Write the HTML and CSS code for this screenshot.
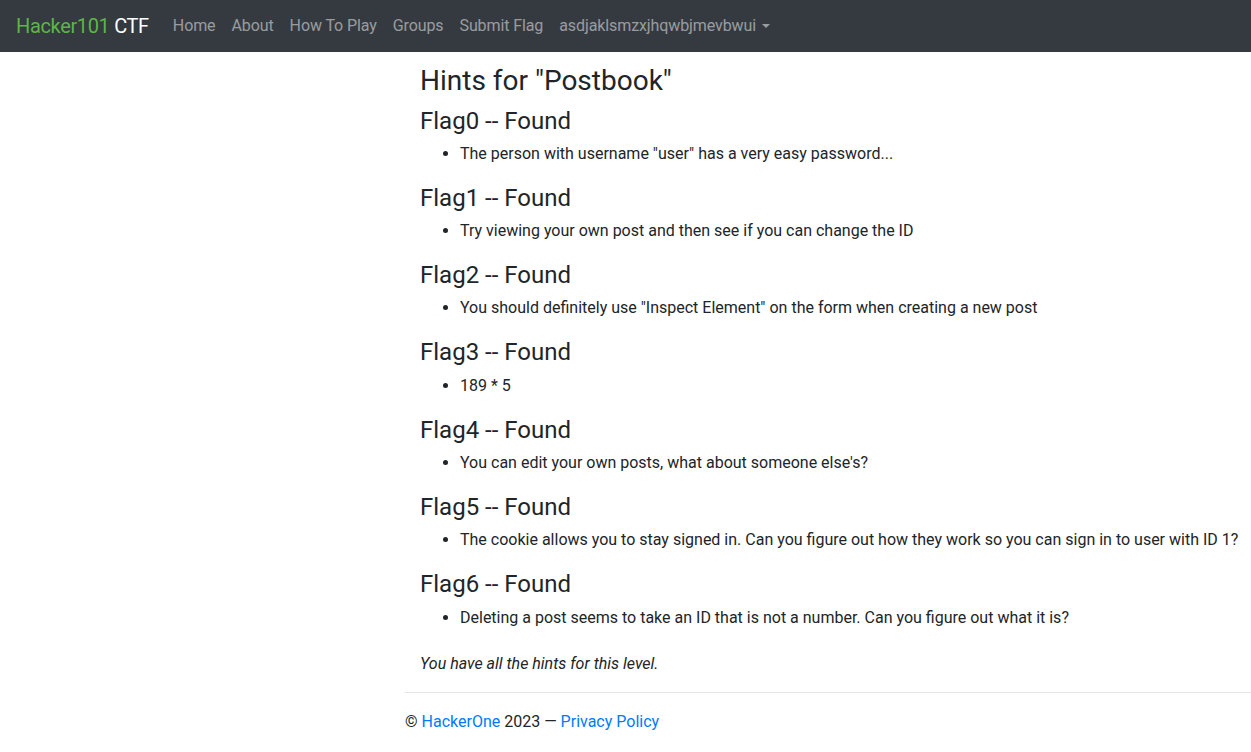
FILE: index.html
```html
<!DOCTYPE html>
<html lang="en">
<head>
<meta charset="utf-8">
<title>Hints for "Postbook"</title>
<link rel="stylesheet" href="styles.css">
</head>
<body>
<nav class="navbar">
  <a class="brand" href="#"><span class="brand-green">Hacker101</span> CTF</a>
  <ul class="nav">
    <li><a href="#">Home</a></li>
    <li><a href="#">About</a></li>
    <li><a href="#">How To Play</a></li>
    <li><a href="#">Groups</a></li>
    <li><a href="#">Submit Flag</a></li>
    <li><a href="#" class="dropdown">asdjaklsmzxjhqwbjmevbwui</a></li>
  </ul>
</nav>
<div class="page">
  <main class="content">
    <h3 class="title">Hints for "Postbook"</h3>
    <h4 class="flag">Flag0 -- Found</h4>
    <ul class="hints"><li>The person with username "user" has a very easy password...</li></ul>
    <h4 class="flag">Flag1 -- Found</h4>
    <ul class="hints"><li>Try viewing your own post and then see if you can change the ID</li></ul>
    <h4 class="flag">Flag2 -- Found</h4>
    <ul class="hints"><li>You should definitely use "Inspect Element" on the form when creating a new post</li></ul>
    <h4 class="flag">Flag3 -- Found</h4>
    <ul class="hints"><li>189 * 5</li></ul>
    <h4 class="flag">Flag4 -- Found</h4>
    <ul class="hints"><li>You can edit your own posts, what about someone else's?</li></ul>
    <h4 class="flag">Flag5 -- Found</h4>
    <ul class="hints"><li>The cookie allows you to stay signed in. Can you figure out how they work so you can sign in to user with ID 1?</li></ul>
    <h4 class="flag">Flag6 -- Found</h4>
    <ul class="hints"><li>Deleting a post seems to take an ID that is not a number. Can you figure out what it is?</li></ul>
    <p class="done"><i>You have all the hints for this level.</i></p>
  </main>
  <footer class="footer">
    <hr class="rule">
    <p class="copy">&copy; <a href="#">HackerOne</a> 2023 &mdash; <a href="#">Privacy Policy</a></p>
  </footer>
</div>
</body>
</html>
```
FILE: styles.css
```css
* { box-sizing: border-box; }
html, body { margin: 0; padding: 0; }
body {
  font-family: Roboto, "Liberation Sans", sans-serif;
  font-size: 16px;
  line-height: 1.5;
  color: #212529;
  background: #fff;
}
a { color: #007bff; text-decoration: none; }

.navbar {
  display: flex;
  align-items: center;
  height: 52px;
  padding: 0 16px;
  background: #343a40;
}
.brand {
  font-size: 20px;
  line-height: 30px;
  color: #fff;
  margin-right: 16px;
  white-space: nowrap;
  letter-spacing: -0.35px;
}
.brand-green { color: #5cb646; }
.nav {
  display: flex;
  list-style: none;
  margin: 0;
  padding: 0;
}
.nav a {
  display: block;
  padding: 8px 8px;
  color: rgba(255, 255, 255, 0.5);
  white-space: nowrap;
  letter-spacing: -0.1px;
}
.dropdown::after {
  content: "";
  display: inline-block;
  margin-left: 6px;
  vertical-align: 3px;
  border-top: 4.5px solid;
  border-left: 4.5px solid transparent;
  border-right: 4.5px solid transparent;
}

.page {
  margin-left: 405px;
}
.content {
  padding: 12px 0 0 15px;
}
.title {
  font-size: 28px;
  font-weight: 400;
  line-height: 1.2;
  margin: 0 0 9px;
}
.flag {
  font-size: 24px;
  font-weight: 400;
  line-height: 1.2;
  margin: 0 0 6.5px;
}
.hints {
  margin: 0 0 18px;
  padding-left: 40px;
  white-space: nowrap;
}
.done {
  margin: 22px 0 16px;
}
.rule {
  margin: 0;
  border: 0;
  border-top: 1px solid rgba(0, 0, 0, 0.1);
}
.copy {
  margin: 17px 0 0;
}
```
